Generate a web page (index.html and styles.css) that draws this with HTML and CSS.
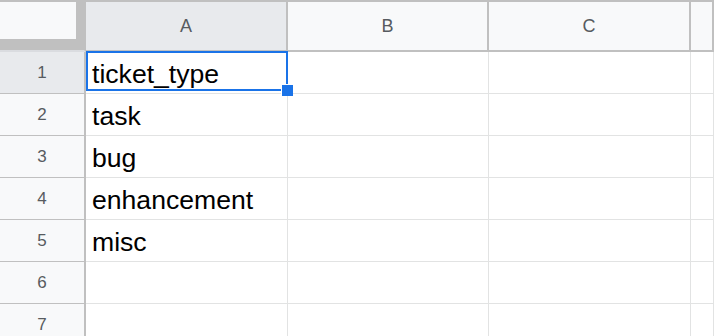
FILE: index.html
```html
<!DOCTYPE html>
<html lang="en">

<head>
    <meta charset="UTF-8">
    <title>Sheet</title>
    <link rel="stylesheet" href="styles.css">
</head>

<body>
    <div class="sheet">
        <!-- Header row -->
        <div class="corner"><div class="corner-box"></div></div>
        <div class="col-head active">A</div>
        <div class="col-head">B</div>
        <div class="col-head">C</div>
        <div class="col-head"></div>

        <!-- Row 1 -->
        <div class="row-head active">1</div>
        <div class="cell selected">ticket_type
            <div class="selection"></div>
            <div class="fill-handle"></div>
        </div>
        <div class="cell"></div>
        <div class="cell"></div>
        <div class="cell"></div>

        <div class="row-head">2</div>
        <div class="cell">task</div>
        <div class="cell"></div>
        <div class="cell"></div>
        <div class="cell"></div>

        <div class="row-head">3</div>
        <div class="cell">bug</div>
        <div class="cell"></div>
        <div class="cell"></div>
        <div class="cell"></div>

        <div class="row-head">4</div>
        <div class="cell">enhancement</div>
        <div class="cell"></div>
        <div class="cell"></div>
        <div class="cell"></div>

        <div class="row-head">5</div>
        <div class="cell">misc</div>
        <div class="cell"></div>
        <div class="cell"></div>
        <div class="cell"></div>

        <div class="row-head">6</div>
        <div class="cell"></div>
        <div class="cell"></div>
        <div class="cell"></div>
        <div class="cell"></div>

        <div class="row-head">7</div>
        <div class="cell"></div>
        <div class="cell"></div>
        <div class="cell"></div>
        <div class="cell"></div>
    </div>
</body>

</html>
```

FILE: styles.css
```css
/* General Styles */
body {
    margin: 0;
    padding: 0;
    background-color: #fff;
    font-family: 'Liberation Sans', Arial, sans-serif;
    overflow: hidden;
}

/* Grid */
.sheet {
    display: grid;
    grid-template-columns: 86px 202px 201px 202px 1fr;
    grid-auto-rows: 42px;
    grid-template-rows: 52px;
    width: 714px;
    height: 336px;
    overflow: hidden;
}

/* Header Styles */
.corner {
    background-color: #c0c0c0;
    border-bottom: 2px solid #dadce0;
    box-sizing: border-box;
    border-right: 2px solid #c0c0c0;
}

.corner-box {
    width: 76px;
    height: 37px;
    margin-top: 2px;
    background-color: #f8f9fa;
}

.col-head {
    display: flex;
    align-items: center;
    justify-content: center;
    background-color: #f8f9fa;
    border-top: 2px solid #c0c0c0;
    border-bottom: 2px solid #c0c0c0;
    border-right: 2px solid #c0c0c0;
    box-sizing: border-box;
    color: #575b60;
    font-size: 18px;
}

.col-head.active {
    background-color: #e8eaed;
}

.row-head {
    display: flex;
    align-items: center;
    justify-content: center;
    background-color: #f8f9fa;
    border-right: 2px solid #c0c0c0;
    border-bottom: 1px solid #c0c0c0;
    box-sizing: border-box;
    color: #575b60;
    font-size: 17px;
}

.row-head.active {
    background-color: #e8eaed;
}

/* Cell Styles */
.cell {
    display: flex;
    align-items: flex-end;
    padding: 0 0 6px 6px;
    border-right: 1px solid #e2e3e3;
    border-bottom: 1px solid #e2e3e3;
    box-sizing: border-box;
    color: #000;
    font-size: 26.6px;
    line-height: 26px;
    white-space: nowrap;
}

.cell.selected {
    position: relative;
}

.selection {
    position: absolute;
    left: 0;
    top: -1px;
    width: 202px;
    height: 40px;
    border: 2px solid #1a73e8;
    box-sizing: border-box;
}

.fill-handle {
    position: absolute;
    left: 195px;
    top: 32px;
    width: 11px;
    height: 11px;
    background-color: #1a73e8;
    border-left: 1px solid #fff;
    border-top: 1px solid #fff;
}
```
